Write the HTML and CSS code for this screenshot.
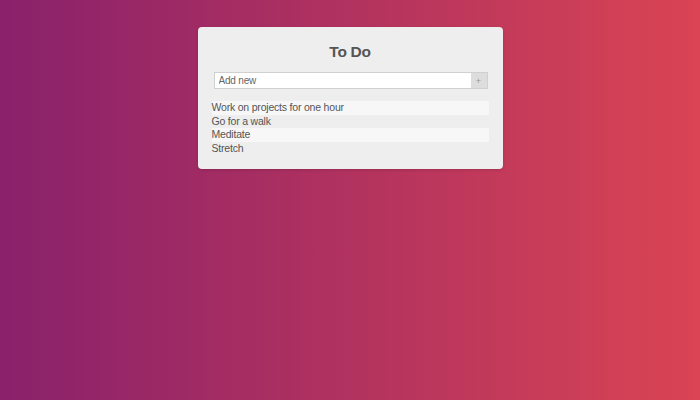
FILE: index.html
```html
<!DOCTYPE html>
<html>
<head>
<meta charset="utf-8">
<link rel="stylesheet" href="styles.css">
</head>
<body>
<div class="card">
  <h1 class="title">To Do</h1>
  <div class="add-row">
    <input class="add-input" type="text" placeholder="Add new">
    <button class="add-btn">+</button>
  </div>
  <ul class="list">
    <li class="item">Work on projects for one hour</li>
    <li class="item">Go for a walk</li>
    <li class="item">Meditate</li>
    <li class="item">Stretch</li>
  </ul>
</div>
</body>
</html>
```
FILE: styles.css
```css
html, body {
  margin: 0;
  height: 100%;
}
body {
  background: linear-gradient(to right, #89216b, #da4453);
  font-family: "Liberation Sans", Arial, sans-serif;
  padding-top: 27px;
  box-sizing: border-box;
}
.card {
  width: 305px;
  margin: 0 auto;
  background: #eeeeee;
  border-radius: 4px;
  padding: 15px 14px 14px;
  box-sizing: border-box;
  box-shadow: 0 1px 3px rgba(0,0,0,0.15);
}
.title {
  margin: 0 0 11px;
  text-align: center;
  font-size: 15.5px;
  line-height: 19px;
  letter-spacing: -0.3px;
  font-weight: bold;
  color: #555;
}
.add-row {
  display: flex;
  margin: 0 1px 0 2px;
  height: 17px;
  border: 1px solid #d0d0d0;
  box-sizing: border-box;
  background: #fff;
}
.add-input {
  flex: 1;
  border: 0;
  margin: 0;
  padding: 0 4px;
  font-family: "Liberation Sans", Arial, sans-serif;
  font-size: 10px;
  letter-spacing: -0.2px;
  color: #555;
  background: #fff;
  outline: none;
  min-width: 0;
}
.add-input::placeholder {
  color: #666;
}
.add-btn {
  width: 16px;
  border: 0;
  margin: 0;
  padding: 0;
  background: #dddddd;
  color: #999;
  font-size: 9px;
  font-family: "Liberation Sans", Arial, sans-serif;
}
.list {
  list-style: none;
  margin: 12px 0 0;
  padding: 0;
}
.item {
  font-size: 10.5px;
  line-height: 13.5px;
  letter-spacing: -0.2px;
  color: #555;
}
.item:nth-child(odd) {
  background: #f7f7f7;
}
```
